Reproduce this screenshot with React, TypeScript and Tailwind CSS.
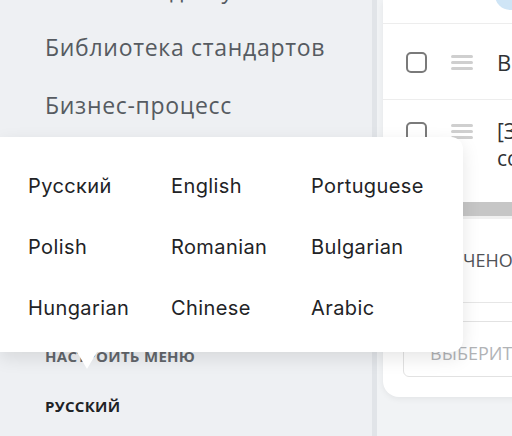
import React from "react";

const navItems = ["Заявки на доступ", "Библиотека стандартов", "Бизнес-процесс", "Отчёты", "Справочники", "Помощь"];

const languages = [
  "Русский", "English", "Portuguese",
  "Polish", "Romanian", "Bulgarian",
  "Hungarian", "Chinese", "Arabic",
];

function Checkbox() {
  return <span className="block w-[21px] h-[21px] rounded-[5px] border-2 border-[#7a7a7a] bg-white shrink-0" />;
}

function DragHandle() {
  return (
    <span className="flex flex-col gap-[3px] w-[22px] shrink-0">
      <span className="h-[3px] bg-[#cfcfcf] rounded-full" />
      <span className="h-[3px] bg-[#cfcfcf] rounded-full" />
      <span className="h-[3px] bg-[#cfcfcf] rounded-full" />
    </span>
  );
}

export default function App() {
  return (
    <div className="relative w-[512px] h-[436px] overflow-hidden flex bg-[#f1f3f5]" style={{ fontFamily: '"Open Sans", "Noto Sans", sans-serif' }}>
      {/* Sidebar */}
      <aside className="w-[377px] shrink-0 h-full bg-[#eef0f3] border-r-[5px] border-[#e1e4e8] flex flex-col">
        <div className="flex flex-col mt-[-40px]">
          {navItems.map((item) => (
            <div key={item} className="h-[58px] flex items-center pl-[45px] text-[23px] tracking-[0.7px] text-[#565b61] whitespace-nowrap">
              {item}
            </div>
          ))}
        </div>
        <div className="flex flex-col mt-[23px]">
          <div className="h-[50px] flex items-center pl-[45px] text-[15px] font-bold text-[#62666b] uppercase tracking-[0.3px]">
            Настроить меню
          </div>
          <div className="h-[50px] flex items-center pl-[45px] text-[15px] font-bold text-[#202226] uppercase tracking-[0.3px]">
            Русский
          </div>
        </div>
      </aside>

      {/* Main */}
      <main className="flex-1 pl-[6px]">
        <div className="w-[200px] h-[397px] bg-white rounded-bl-2xl shadow-[0_2px_6px_rgba(0,0,0,0.06)] flex flex-col">
          <div className="h-[24px] border-b border-[#ededed] flex justify-start pl-[112px] overflow-hidden">
            <span className="block w-[30px] h-[30px] mt-[-20px] rounded-full bg-[#cfe5f6]" />
          </div>
          <div className="h-[76px] border-b border-[#ededed] flex items-center gap-[24px] pl-[23px] pt-[2px]">
            <Checkbox />
            <DragHandle />
            <span className="text-[22px] text-[#303235] whitespace-nowrap">Выбрать все</span>
          </div>
          <div className="h-[102px] flex items-start gap-[24px] pl-[23px] pt-[22px]">
            <Checkbox />
            <span className="mt-[2px]">
              <DragHandle />
            </span>
            <span className="text-[21px] leading-[27px] text-[#303235] whitespace-nowrap mt-[-4px]">
              [Заявка]<br />согласование
            </span>
          </div>
          <div className="h-[14px] bg-[#c6c6c6]" />
          <div className="h-[87px] border-t-[3px] border-[#f0f0f0] border-b border-b-[#e6e6e6] flex items-center pl-[30px] text-[18px] text-[#505357] uppercase whitespace-nowrap">
            Отмечено
          </div>
          <div className="px-[20px] pt-[18px]">
            <div className="h-[56px] border border-[#e2e2e2] rounded-[6px] flex items-center pl-[26px] pt-[8px] text-[18px] text-[#b1b3b6] uppercase whitespace-nowrap">
              Выберите
            </div>
          </div>
        </div>
      </main>

      {/* Language popup */}
      <div className="absolute left-0 top-[137px] w-[463px] h-[215px] bg-white rounded-r-xl shadow-[0_6px_18px_rgba(0,0,0,0.10)]" style={{ fontFamily: 'Inter, "Noto Sans", sans-serif' }}>
        <div className="grid grid-cols-[143px_140px_1fr] pl-[28px] pt-[18px]">
          {languages.map((lang) => (
            <div key={lang} className="h-[61px] flex items-center text-[20px] text-[#222326] tracking-[0.4px]">
              {lang}
            </div>
          ))}
        </div>
        <span className="absolute left-[77px] top-full w-0 h-0 border-l-[10px] border-r-[10px] border-t-[17px] border-l-transparent border-r-transparent border-t-white" />
      </div>
    </div>
  );
}
